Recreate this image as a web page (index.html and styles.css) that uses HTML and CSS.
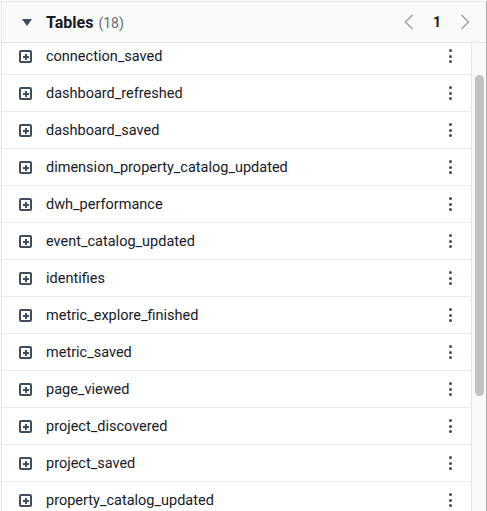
FILE: index.html
```html
<!DOCTYPE html>
<html>
<head>
<meta charset="utf-8">
<link rel="stylesheet" href="styles.css">
</head>
<body>
<div class="panel">
  <div class="header">
    <svg class="caret" width="10" height="8" viewBox="0 0 10 8"><path d="M0 0 H10 L5 7 Z" fill="#414d5c"/></svg>
    <span class="title">Tables</span>
    <span class="count">(18)</span>
    <div class="pager">
      <svg class="chev" width="10" height="16" viewBox="0 0 10 16"><path d="M8.5 1 L1.5 8 L8.5 15" fill="none" stroke="#9ba7b6" stroke-width="1.6"/></svg>
      <span class="page">1</span>
      <svg class="chev" width="10" height="16" viewBox="0 0 10 16"><path d="M1.5 1 L8.5 8 L1.5 15" fill="none" stroke="#9ba7b6" stroke-width="1.6"/></svg>
    </div>
  </div>
  <div class="list">
    <div class="viewport" id="viewport">
      <div class="row"><span class="plus"></span><span class="name">chart_saved</span><span class="kebab"><i></i><i></i><i></i></span></div>
      <div class="row"><span class="plus"></span><span class="name">connection_saved</span><span class="kebab"><i></i><i></i><i></i></span></div>
      <div class="row"><span class="plus"></span><span class="name">dashboard_refreshed</span><span class="kebab"><i></i><i></i><i></i></span></div>
      <div class="row"><span class="plus"></span><span class="name">dashboard_saved</span><span class="kebab"><i></i><i></i><i></i></span></div>
      <div class="row"><span class="plus"></span><span class="name">dimension_property_catalog_updated</span><span class="kebab"><i></i><i></i><i></i></span></div>
      <div class="row"><span class="plus"></span><span class="name">dwh_performance</span><span class="kebab"><i></i><i></i><i></i></span></div>
      <div class="row"><span class="plus"></span><span class="name">event_catalog_updated</span><span class="kebab"><i></i><i></i><i></i></span></div>
      <div class="row"><span class="plus"></span><span class="name">identifies</span><span class="kebab"><i></i><i></i><i></i></span></div>
      <div class="row"><span class="plus"></span><span class="name">metric_explore_finished</span><span class="kebab"><i></i><i></i><i></i></span></div>
      <div class="row"><span class="plus"></span><span class="name">metric_saved</span><span class="kebab"><i></i><i></i><i></i></span></div>
      <div class="row"><span class="plus"></span><span class="name">page_viewed</span><span class="kebab"><i></i><i></i><i></i></span></div>
      <div class="row"><span class="plus"></span><span class="name">project_discovered</span><span class="kebab"><i></i><i></i><i></i></span></div>
      <div class="row"><span class="plus"></span><span class="name">project_saved</span><span class="kebab"><i></i><i></i><i></i></span></div>
      <div class="row"><span class="plus"></span><span class="name">property_catalog_updated</span><span class="kebab"><i></i><i></i><i></i></span></div>
      <div class="row"><span class="plus"></span><span class="name">query_run</span><span class="kebab"><i></i><i></i><i></i></span></div>
      <div class="row"><span class="plus"></span><span class="name">tracks</span><span class="kebab"><i></i><i></i><i></i></span></div>
      <div class="row"><span class="plus"></span><span class="name">user_signed_in</span><span class="kebab"><i></i><i></i><i></i></span></div>
      <div class="row"><span class="plus"></span><span class="name">workspace_saved</span><span class="kebab"><i></i><i></i><i></i></span></div>
    </div>
    <div class="scrollbar"><div class="thumb"></div></div>
  </div>
</div>
<script src="script.js"></script>
</body>
</html>
```
FILE: styles.css
```css
html, body {
  margin: 0;
  padding: 0;
  background: #ffffff;
}
body {
  font-family: Roboto, "Liberation Sans", Arial, sans-serif;
  color: #16191f;
}
.panel {
  margin: 1px 0 0 1px;
  width: 486px;
  height: 510px;
  box-sizing: border-box;
  border-left: 1px solid #e4e6e8;
  border-top: 1px solid #e4e6e8;
  border-right: 1px solid #a9a9a9;
  display: flex;
  flex-direction: column;
  overflow: hidden;
}
.header {
  height: 40px;
  flex: none;
  background: #fafafa;
  border-bottom: 1px solid #e4e6e8;
  display: flex;
  align-items: center;
  padding: 0 0 0 20px;
}
.caret {
  margin-right: 14px;
  margin-top: 1px;
}
.title {
  font-weight: 700;
  font-size: 16px;
  color: #16191f;
}
.count {
  font-size: 14px;
  color: #5f6b7a;
  margin-left: 5px;
  margin-top: 1px;
}
.pager {
  margin-left: auto;
  display: flex;
  align-items: center;
  padding-right: 16px;
}
.chev {
  display: block;
}
.page {
  font-weight: 700;
  font-size: 14px;
  width: 46px;
  text-align: center;
  color: #16191f;
}
.list {
  flex: 1;
  min-height: 0;
  display: flex;
}
.viewport {
  flex: 1;
  overflow: hidden;
}
.scrollbar {
  width: 15px;
  flex: none;
  box-sizing: border-box;
  border-left: 1px solid #e6e6e6;
  background: #fafafa;
  padding: 32px 2px 0 3px;
}
.thumb {
  height: 321px;
  background: #c2c2c2;
  border-radius: 5px;
}
.row {
  height: 36px;
  border-bottom: 1px solid #e9ebed;
  display: flex;
  align-items: center;
  padding-left: 17px;
}
.plus {
  width: 13px;
  height: 13px;
  box-sizing: border-box;
  border: 2px solid #414d5c;
  border-radius: 2px;
  position: relative;
  flex: none;
  margin-right: 14px;
  margin-top: 1px;
}
.plus::before, .plus::after {
  content: "";
  position: absolute;
  background: #414d5c;
}
.plus::before {
  left: 1.5px;
  top: 3.5px;
  width: 6px;
  height: 2px;
}
.plus::after {
  left: 3.5px;
  top: 1.5px;
  width: 2px;
  height: 6px;
}
.name {
  font-size: 14.5px;
  color: #16191f;
  flex: 1;
}
.kebab {
  display: flex;
  flex-direction: column;
  gap: 2.5px;
  margin-right: 19px;
  width: 4px;
  align-items: center;
}
.kebab i {
  display: block;
  width: 3px;
  height: 3px;
  border-radius: 50%;
  background: #414d5c;
}
```
FILE: script.js
```js
document.getElementById('viewport').scrollTop = 42;
```
